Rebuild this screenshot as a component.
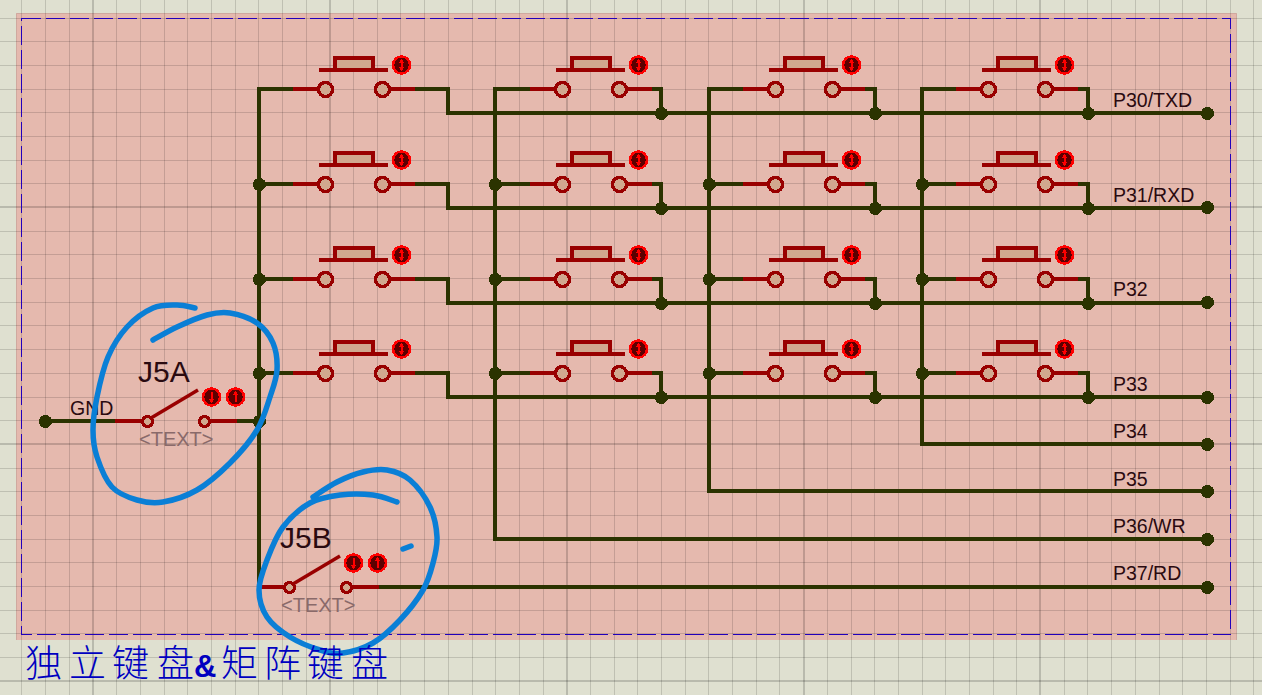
// 独立键盘 & 矩阵键盘 schematic sheet
const WIRE = '#2b3300';
const PIN = '#990000';
const GRID_STEP = 23.69;

const rows = [89, 184, 279, 373];
// bus: vertical wire on the left, left: first pin x, out: x where the right wire turns down
const columns = [
  { bus: 259, left: 325, out: 448, dot: false },
  { bus: 495, left: 562, out: 661, dot: true },
  { bus: 709, left: 775, out: 875, dot: true },
  { bus: 922, left: 988, out: 1088, dot: true },
];

const gridX = Array.from({ length: 53 }, (_, i) => i).filter((i) => i % 10 !== 3).map((i) => 21.9 + i * GRID_STEP);
const gridY = Array.from({ length: 29 }, (_, i) => i).filter((i) => i % 10 !== 8).map((i) => 18 + i * GRID_STEP);
const majorX = [93, 330, 567, 804, 1040];
const majorY = [207, 444, 681];

const labels = [
  ['P30/TXD', 107],
  ['P31/RXD', 202],
  ['P32', 296],
  ['P33', 391],
  ['P34', 438],
  ['P35', 486],
  ['P36/WR', 533],
  ['P37/RD', 580],
] as const;

const titleChars = ['独', '立', '键', '盘', '&', '矩', '阵', '键', '盘'];
const titleX = [25, 69, 112, 157, 194, 221, 264, 307, 351];

const loopA: [number, number][] = [
  [153, 340], [177, 327], [207, 315], [230, 313], [257, 323], [273, 343], [277, 370], [270, 397], [257, 430],
  [230, 463], [197, 490], [163, 502], [137, 500], [112, 487], [97, 457], [93, 430], [97, 397], [108, 357],
  [127, 327], [153, 308], [177, 305], [195, 308],
];
const loopB: [number, number][] = [
  [313, 497], [337, 482], [363, 472], [387, 470], [410, 480], [430, 507], [437, 537], [433, 563], [423, 590],
  [400, 620], [373, 643], [343, 653], [320, 650], [290, 637], [267, 617], [259, 590], [267, 560], [283, 527],
  [310, 503], [340, 495], [373, 495], [397, 502],
];

// smooth line through the points
function spline(pts: [number, number][]) {
  let d = `M${pts[0][0]} ${pts[0][1]}`;
  for (let i = 0; i < pts.length - 1; i++) {
    const a = pts[Math.max(i - 1, 0)];
    const b = pts[i];
    const c = pts[i + 1];
    const e = pts[Math.min(i + 2, pts.length - 1)];
    d += `C${b[0] + (c[0] - a[0]) / 6} ${b[1] + (c[1] - a[1]) / 6} ${c[0] - (e[0] - b[0]) / 6} ${c[1] - (e[1] - b[1]) / 6} ${c[0]} ${c[1]}`;
  }
  return d;
}

function Wire({ d }: { d: string }) {
  return <path d={d} fill="none" stroke={WIRE} strokeWidth={4} shapeRendering="crispEdges" />;
}

function Dot({ x, y }: { x: number; y: number }) {
  return <circle cx={x + 0.5} cy={y + 0.5} r={6.5} fill={WIRE} shapeRendering="crispEdges" />;
}

function Probe({ x, y, glyph }: { x: number; y: number; glyph: 'both' | 'down' | 'up' }) {
  return (
    <g shapeRendering="crispEdges">
      <circle cx={x} cy={y} r={8.5} fill="#5c0000" stroke="#ff0000" strokeWidth={2.5} />
      <g fill="#ff0000">
        <rect x={x - 1} y={y - 5} width={2} height={10} />
        {glyph !== 'down' && <path d={`M${x} ${y - 6}L${x + 3} ${y - 2}H${x - 3}Z`} />}
        {glyph !== 'up' && <path d={`M${x} ${y + 6}L${x + 3} ${y + 2}H${x - 3}Z`} />}
      </g>
    </g>
  );
}

function Button({ x, y }: { x: number; y: number }) {
  // x = centre of the left pin, y = wire height
  return (
    <g>
      <path d={`M${x - 32} ${y}H${x - 7}M${x + 64} ${y}H${x + 90}`} stroke={PIN} strokeWidth={4} shapeRendering="crispEdges" />
      <path
        d={`M${x + 9.5} ${y - 19}V${y - 31}H${x + 47.5}V${y - 19}Z`}
        fill="#d1a88f"
        stroke={PIN}
        strokeWidth={4}
        shapeRendering="crispEdges"
      />
      <path d={`M${x - 6} ${y - 19}H${x + 63}`} stroke={PIN} strokeWidth={4} shapeRendering="crispEdges" />
      <circle cx={x + 0.5} cy={y + 0.5} r={7} fill="#d1a88f" stroke={PIN} strokeWidth={3.5} shapeRendering="crispEdges" />
      <circle cx={x + 57.5} cy={y + 0.5} r={7} fill="#d1a88f" stroke={PIN} strokeWidth={3.5} shapeRendering="crispEdges" />
      <Probe x={x + 76.5} y={y - 24} glyph="both" />
    </g>
  );
}

function Jumper({ x, y, name }: { x: number; y: number; name: string }) {
  // x = centre of the left pin, y = wire height
  return (
    <g>
      <path d={`M${x - 32} ${y}H${x - 5}M${x + 62} ${y}H${x + 90}`} stroke={PIN} strokeWidth={4} shapeRendering="crispEdges" />
      <path d={`M${x + 4} ${y - 3}L${x + 51} ${y - 31}`} stroke={PIN} strokeWidth={3.5} />
      <circle cx={x + 0.5} cy={y + 0.5} r={5} fill="#d1a88f" stroke={PIN} strokeWidth={3.5} shapeRendering="crispEdges" />
      <circle cx={x + 57.5} cy={y + 0.5} r={5} fill="#d1a88f" stroke={PIN} strokeWidth={3.5} shapeRendering="crispEdges" />
      <Probe x={x + 64.5} y={y - 24} glyph="down" />
      <Probe x={x + 88.5} y={y - 24} glyph="up" />
      <text x={x - 9} y={y - 39} className="fill-[#2a0a10] font-['Liberation_Sans',sans-serif] text-[30px]">
        {name}
      </text>
      <text x={x - 8} y={y + 25} className="fill-[#8a6a6a] font-['Liberation_Sans',sans-serif] text-[20px]">
        {'<TEXT>'}
      </text>
    </g>
  );
}

export default function App() {
  return (
    <div className="relative h-[695px] w-[1262px] overflow-hidden bg-[#dfe0d0]">
      <svg width={1262} height={695} viewBox="0 0 1262 695" className="block">
        {/* sheet */}
        <rect x={16} y={13} width={1221} height={627} fill="#e5b9ae" />
        <path d="M16.5 640V13.5H1236.5V640" fill="none" stroke="#cfa99f" strokeWidth={1} />

        {/* grid */}
        <g stroke="#000" shapeRendering="crispEdges">
          {gridX.map((p) => (
            <line key={p} x1={p} y1={0} x2={p} y2={695} strokeOpacity={0.14} />
          ))}
          {gridY.map((p) => (
            <line key={p} x1={0} y1={p} x2={1262} y2={p} strokeOpacity={0.14} />
          ))}
          {majorX.map((p) => (
            <line key={p} x1={p} y1={0} x2={p} y2={695} strokeOpacity={0.17} strokeWidth={2} />
          ))}
          {majorY.map((p) => (
            <line key={p} x1={0} y1={p} x2={1262} y2={p} strokeOpacity={0.17} strokeWidth={2} />
          ))}
        </g>

        {/* sheet border */}
        <rect x={21.5} y={18.5} width={1209} height={616} fill="none" stroke="#2200bb" strokeWidth={1.5} strokeDasharray="19 5" shapeRendering="crispEdges" />

        {/* wires */}
        <Wire d="M293 89H259V587H262" />
        <Wire d="M530 89H495V539H1207" />
        <Wire d="M743 89H709V491H1207" />
        <Wire d="M956 89H922V444H1207" />
        <Wire d="M45 421H115M237 421H259" />
        <Wire d="M378 587H1207" />
        {columns.map((c) =>
          rows.map((y, i) => (
            <g key={c.left + '-' + y}>
              {i > 0 && <Wire d={`M${c.bus} ${y}H${c.left - 32}`} />}
              <Wire d={`M${c.left + 90} ${y}H${c.out}V${y + 24}H${c.out === 448 ? 1207 : c.out}`} />
              {i > 0 && <Dot x={c.bus} y={y} />}
              {c.dot && <Dot x={c.out} y={y + 24} />}
              <Button x={c.left} y={y} />
            </g>
          )),
        )}
        <Dot x={259} y={421} />
        <Dot x={45} y={421} />
        {[113, 207, 302, 397, 444, 491, 539, 587].map((y) => (
          <Dot key={y} x={1207} y={y} />
        ))}

        <Jumper x={147} y={421} name="J5A" />
        <Jumper x={289} y={587} name="J5B" />

        {/* net labels */}
        <text x={70} y={415} className="fill-[#2a0a10] font-['Liberation_Sans',sans-serif] text-[19.5px]">
          GND
        </text>
        {labels.map(([name, y]) => (
          <text key={name} x={1113} y={y} className="fill-[#2a0a10] font-['Liberation_Sans',sans-serif] text-[19.5px]">
            {name}
          </text>
        ))}

        {/* hand drawn marks */}
        <g fill="none" stroke="#0a7fd6" strokeWidth={5.5} strokeLinecap="round" strokeLinejoin="round">
          <path d={spline(loopA)} />
          <path d={spline(loopB)} />
          <path d="M403 549L411 546" />
        </g>

        {/* title */}
        <text y={677} className="fill-[#0000c0] font-['Noto_Sans_CJK_SC',sans-serif] text-[37px] font-light">
          {titleChars.map((ch, i) => (
            <tspan key={i} x={titleX[i]} className={ch === '&' ? "font-['Liberation_Sans',sans-serif] text-[31px] font-bold" : ''}>
              {ch}
            </tspan>
          ))}
        </text>
      </svg>
    </div>
  );
}
